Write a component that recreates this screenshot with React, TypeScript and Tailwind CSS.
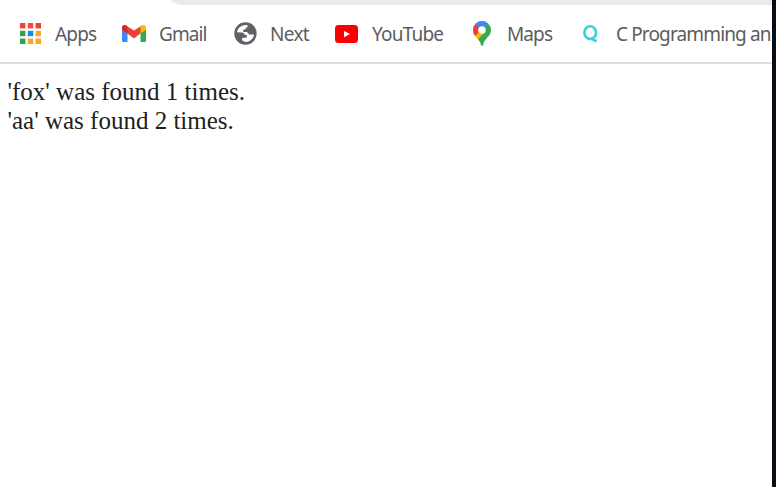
import type { ReactNode } from 'react';

function AppsIcon() {
  const dots = ['#e8453c', '#f04a40', '#ea4335', '#34a04f', '#1e88e5', '#f9a825', '#34a04f', '#f5a623', '#f9a825'];
  return (
    <svg width="21" height="21" viewBox="0 0 21 21">
      {dots.map((c, i) => (
        <rect key={i} x={(i % 3) * 7.8} y={Math.floor(i / 3) * 7.8} width="5.4" height="5.4" fill={c} />
      ))}
    </svg>
  );
}

function GmailIcon() {
  return (
    <svg width="24" height="17" viewBox="0 0 24 17">
      <path fill="#4285f4" d="M0 4h5.500v13H1.500Q0 17 0 15.500z" />
      <path fill="#34a853" d="M18.500 4H24v11.500q0 1.500-1.500 1.500h-4z" />
      <path fill="#ea4335" d="M4 .4 12 5.500 20 .4v6.800l-8 6.200-8-6z" />
      <path fill="#d22c24" d="M0 2.200C0 .3 2-.5 3.800.3L5.500 1.500v6.800L0 5z" />
      <path fill="#fbbc04" d="M24 2.200C24 .3 22-.5 20.200.3l-1.700 1.200v6.800L24 5z" />
    </svg>
  );
}

function GlobeIcon() {
  return (
    <svg width="23" height="23" viewBox="0 0 23 23">
      <circle cx="11.5" cy="11.5" r="11.2" fill="#5f6368" />
      <path
        fill="#fff"
        d="M13.500 3.200C8.500 2.200 3.800 5.500 3 10.300l5 .2c1.600.1 2.500.9 2.600 2.200l2.200.2v2.500l-4.600.5v2.600l3.300 1.600c4.500 0 8-3.200 8.500-7.500l-4.800-.2-2.200-2.400h-3.800V7.700l2.600-.4V5.500h1.700z"
      />
    </svg>
  );
}

function YouTubeIcon() {
  return (
    <svg width="23" height="18" viewBox="0 0 23 18">
      <rect width="23" height="18" rx="3.5" fill="#fb0000" />
      <path fill="#fff" d="M9 6v6.200l6-3.100z" />
    </svg>
  );
}

function MapsIcon() {
  return (
    <svg width="18" height="25" viewBox="0 0 18 25">
      <defs>
        <clipPath id="pin">
          <path d="M9 0a9 9 0 0 0-9 9c0 6.500 6.600 8.200 8 14.900.3 1.400 1.700 1.400 2 0C11.400 17.200 18 15.500 18 9a9 9 0 0 0-9-9z" />
        </clipPath>
      </defs>
      <g clipPath="url(#pin)">
        <path fill="#34a853" d="M0 0h18v25H0z" />
        <path fill="#fbbc04" d="M-1 11 6 5l6 6-9.500 10z" />
        <path fill="#ea4335" d="M-1 0h4l6 8-7 7-3-1z" />
        <path fill="#4285f4" d="M2 3 9 9l7-7-4-3H4z" />
      </g>
      <circle cx="9" cy="9" r="3.8" fill="#fff" />
    </svg>
  );
}

function QIcon() {
  return (
    <svg width="15" height="18" viewBox="0 0 15 18" fill="none" stroke="#35d0e0" strokeWidth="2.6">
      <ellipse cx="7.2" cy="7.700" rx="5.800" ry="6.400" />
      <path d="M7.500 13.200c2 .2 2.700 2.800 6.300 2.700" />
    </svg>
  );
}

function Bookmark({ icon, label, item, slot, text }: { icon: ReactNode; label: string; item: string; slot: string; text: string }) {
  return (
    <div className={`flex h-full shrink-0 items-center ${item}`}>
      <span className={`flex shrink-0 items-center ${slot}`}>{icon}</span>
      <span className={`whitespace-nowrap ${text}`}>{label}</span>
    </div>
  );
}

export default function App() {
  return (
    <div className="flex h-[487px] w-[776px] overflow-hidden bg-white">
      <main className="flex min-w-0 flex-1 flex-col overflow-hidden">
        <div className="h-[5px] shrink-0 bg-[#e8eaed]">
          <div className="h-full w-[182px] bg-white [clip-path:polygon(0_0,170px_0,173px_2px,177px_4px,182px_5px,0_5px)]" />
        </div>
        <nav className="flex h-[59px] shrink-0 items-center border-b-2 border-[#dadcde] pl-[20px] font-['Noto_Sans',sans-serif] text-[19px] leading-[26px] text-[#5b5d61]">
          <Bookmark icon={<AppsIcon />} label="Apps" item="w-[102px]" slot="w-[35px]" text="tracking-[-0.8px]" />
          <Bookmark icon={<GmailIcon />} label="Gmail" item="w-[112px]" slot="w-[37px]" text="tracking-[-0.9px]" />
          <Bookmark icon={<GlobeIcon />} label="Next" item="w-[101px]" slot="w-[36px]" text="tracking-[-0.7px]" />
          <Bookmark icon={<YouTubeIcon />} label="YouTube" item="w-[138px]" slot="w-[37px]" text="tracking-[-0.8px]" />
          <Bookmark icon={<MapsIcon />} label="Maps" item="w-[110px]" slot="w-[34px]" text="tracking-[-0.9px]" />
          <Bookmark icon={<QIcon />} label="C Programming an" item="" slot="w-[33px]" text="tracking-[-0.86px]" />
        </nav>
        <div className="whitespace-nowrap pl-[7.500px] pt-[13px] font-['Liberation_Serif',serif] text-[25px] leading-[29px] text-[#202020]">
          <p>'fox' was found 1 times.</p>
          <p>'aa' was found 2 times.</p>
        </div>
      </main>
      <div className="w-[4px] shrink-0 bg-[#080c17]" />
    </div>
  );
}
